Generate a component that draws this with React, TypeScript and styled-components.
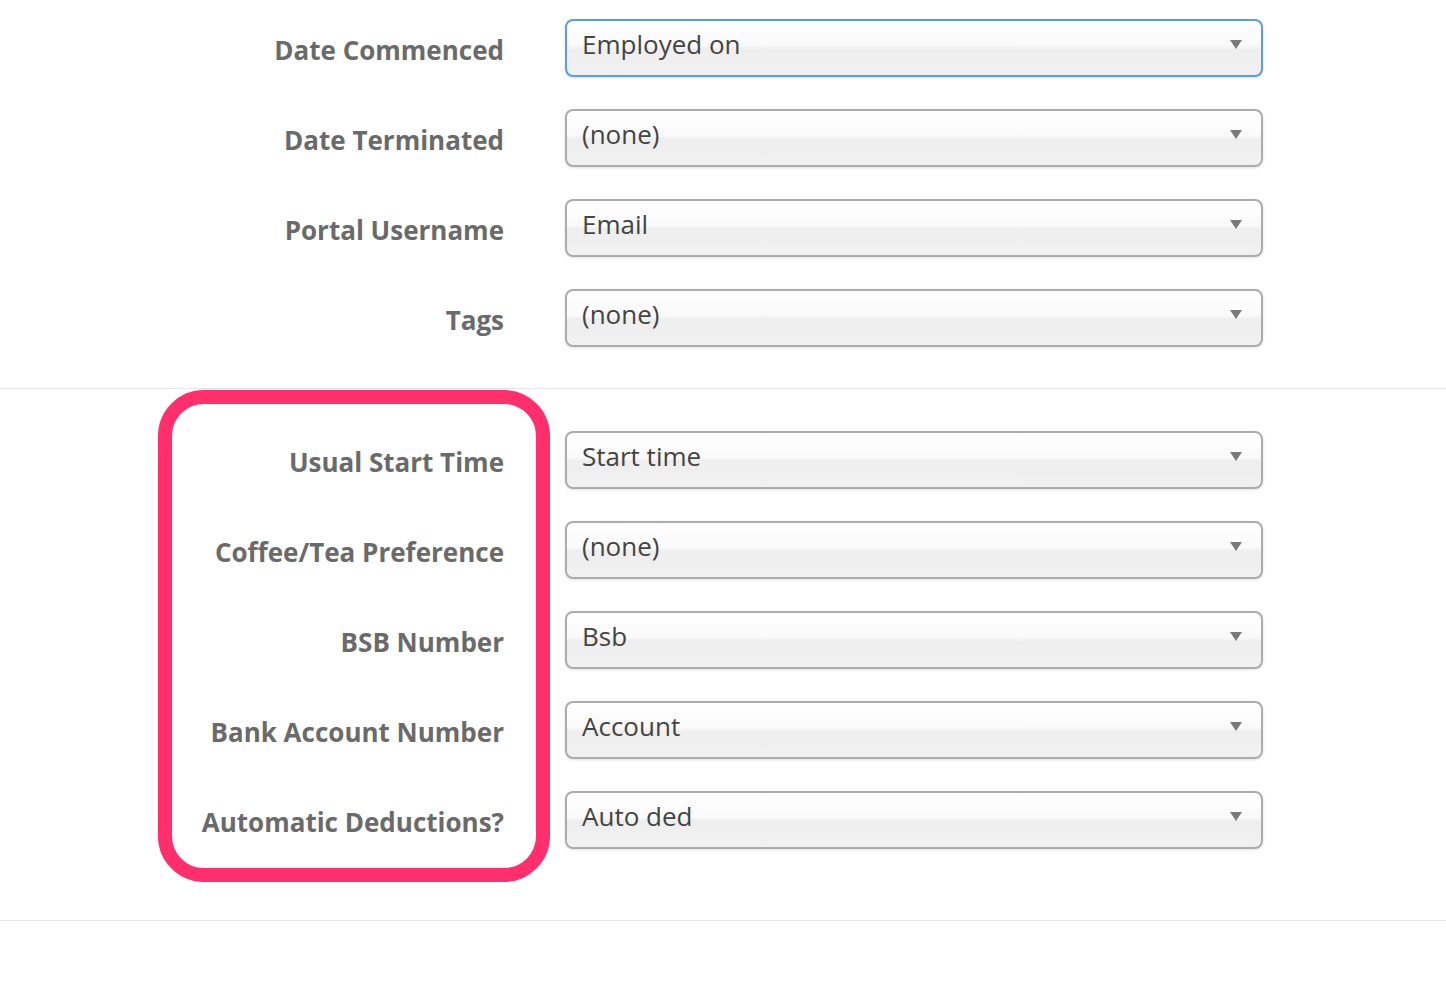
import styled, { createGlobalStyle } from "styled-components";

const GlobalStyle = createGlobalStyle`
  html, body {
    margin: 0;
    padding: 0;
    background: #ffffff;
    font-family: "Open Sans", "Liberation Sans", sans-serif;
  }
`;

const Page = styled.div`
  width: 1446px;
  min-height: 984px;
  background: #ffffff;
`;

const Section = styled.div<{ $top: number; $bottom: number }>`
  position: relative;
  display: flex;
  flex-direction: column;
  gap: 32px;
  padding-top: ${(p) => p.$top}px;
  padding-bottom: ${(p) => p.$bottom}px;
  border-bottom: 1px solid #e6e6e6;
`;

const Row = styled.div`
  display: grid;
  grid-template-columns: 504px 698px;
  column-gap: 61px;
  align-items: center;
  height: 58px;
`;

const Label = styled.label`
  text-align: right;
  font-size: 26px;
  font-weight: 700;
  color: #6a6a6a;
  padding-top: 3px;
  white-space: nowrap;
`;

const Select = styled.div<{ $focused?: boolean }>`
  position: relative;
  box-sizing: border-box;
  height: 58px;
  display: flex;
  align-items: center;
  padding: 0 16px 8px 15px;
  border-radius: 8px;
  border: ${(p) => (p.$focused ? "2px solid #5c9af0" : "2px solid #acacac")};
  background: linear-gradient(
    to bottom,
    #ffffff 0%,
    #fafafa 45%,
    #eeeeee 52%,
    #f1f1f1 100%
  );
  box-shadow: 0 1px 3px rgba(0, 0, 0, 0.12);
  font-size: 26px;
  color: #444444;
`;

const Arrow = styled.span`
  position: absolute;
  right: 19px;
  top: 19px;
  width: 0;
  height: 0;
  border-left: 6px solid transparent;
  border-right: 6px solid transparent;
  border-top: 9px solid #7a7a7a;
`;

const Highlight = styled.div`
  position: absolute;
  left: 158px;
  top: 1px;
  width: 392px;
  height: 492px;
  box-sizing: border-box;
  border: 14px solid #ff2e6d;
  border-radius: 46px;
  pointer-events: none;
`;

type Field = { label: string; value: string; focused?: boolean };

const general: Field[] = [
  { label: "Date Commenced", value: "Employed on", focused: true },
  { label: "Date Terminated", value: "(none)" },
  { label: "Portal Username", value: "Email" },
  { label: "Tags", value: "(none)" },
];

const custom: Field[] = [
  { label: "Usual Start Time", value: "Start time" },
  { label: "Coffee/Tea Preference", value: "(none)" },
  { label: "BSB Number", value: "Bsb" },
  { label: "Bank Account Number", value: "Account" },
  { label: "Automatic Deductions?", value: "Auto ded" },
];

const FieldRow = ({ field }: { field: Field }) => (
  <Row>
    <Label>{field.label}</Label>
    <Select $focused={field.focused}>
      {field.value}
      <Arrow />
    </Select>
  </Row>
);

export default function App() {
  return (
    <Page>
      <GlobalStyle />
      <Section $top={19} $bottom={41}>
        {general.map((f) => (
          <FieldRow key={f.label} field={f} />
        ))}
      </Section>
      <Section $top={42} $bottom={71}>
        <Highlight />
        {custom.map((f) => (
          <FieldRow key={f.label} field={f} />
        ))}
      </Section>
    </Page>
  );
}
